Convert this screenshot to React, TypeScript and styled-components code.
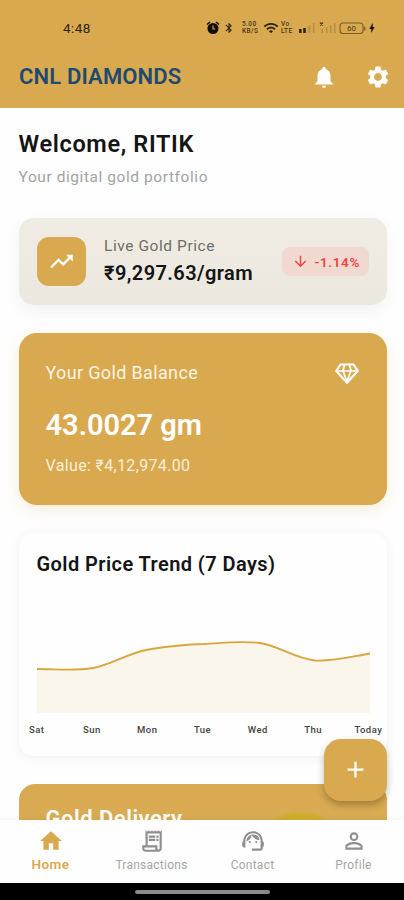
import React from 'react';
import styled, { createGlobalStyle } from 'styled-components';
import {
  MdAdd, MdArrowDownward, MdBluetooth, MdBolt, MdHome, MdNotifications,
  MdOutlineReceiptLong, MdOutlineSupportAgent, MdPersonOutline,
  MdSettings, MdTrendingUp, MdWifi,
} from 'react-icons/md';

const gold = '#d8a94f';

const GlobalStyle = createGlobalStyle`
  * { box-sizing: border-box; }
  body { margin: 0; background: #fefefe; font-family: Roboto, "Noto Sans", sans-serif; }
  svg { display: block; flex: none; }
`;

const Screen = styled.div`
  display: flex;
  flex-direction: column;
  width: 404px;
  height: 900px;
  overflow: hidden;
  background: #fefefe;
`;

const Header = styled.header`
  flex: none;
  height: 108px;
  background: ${gold};
`;

const StatusBar = styled.div`
  display: flex;
  align-items: center;
  justify-content: space-between;
  height: 56px;
  padding: 0 26px 0 63px;
  color: #2e2411;
`;

const Clock = styled.span`
  font-size: 13.5px;
  font-weight: 400;
  letter-spacing: 0.4px;
  line-height: 16px;
`;

const StatusIcons = styled.div`
  display: flex;
  align-items: center;
`;

const Stack = styled.span<{ $w: number }>`
  display: flex;
  flex-direction: column;
  width: ${p => p.$w}px;
  margin: 0 3px 0 2px;
  font-size: 6.5px;
  font-weight: 500;
  letter-spacing: 0.4px;
  line-height: 7px;
  white-space: nowrap;
  opacity: 0.85;
`;

const AppBar = styled.div`
  display: flex;
  align-items: center;
  height: 42px;
  padding: 0 13px 0 19px;
  color: #fff;
`;

const Brand = styled.h1`
  flex: 1;
  margin: 0;
  color: #1d4a70;
  font-size: 22px;
  font-weight: 600;
  letter-spacing: 0.15px;
  line-height: 26px;
`;

const Actions = styled.div`
  display: flex;
  gap: 28px;
`;

const Body = styled.main`
  flex: 1;
  min-height: 0;
  overflow: hidden;
  padding: 22px 17.5px 0 18.5px;
`;

const Label = styled.div<{
  $size: number; $line: number; $weight?: number; $color?: string; $spacing?: number; $top?: number;
}>`
  margin-top: ${p => p.$top ?? 0}px;
  color: ${p => p.$color ?? '#141414'};
  font-size: ${p => p.$size}px;
  font-weight: ${p => p.$weight ?? 400};
  letter-spacing: ${p => p.$spacing ?? 0}px;
  line-height: ${p => p.$line}px;
  white-space: nowrap;
`;

const Welcome = styled.section`
  height: 88px;
`;

const PriceCard = styled.section`
  display: flex;
  align-items: center;
  height: 87px;
  padding: 0 18px;
  border-radius: 15px;
  background: linear-gradient(#f0ece4, #ebe8e0);
  box-shadow: 0 5px 14px rgba(70, 65, 50, 0.07);
`;

const TrendTile = styled.div`
  display: flex;
  align-items: center;
  justify-content: center;
  width: 49.5px;
  height: 49.5px;
  margin-right: 18px;
  border-radius: 12px;
  background: ${gold};
  color: #fff;
`;

const PriceText = styled.div`
  flex: 1;
  padding-bottom: 3px;
`;

const Change = styled.div`
  display: flex;
  align-items: center;
  width: 87px;
  height: 29px;
  padding-left: 10px;
  gap: 6px;
  border-radius: 8px;
  background: #f1d9d2;
  color: #f0453e;
`;

const BalanceCard = styled.section`
  height: 172px;
  margin-top: 27.5px;
  padding: 27px;
  border-radius: 18px;
  background: ${gold};
  box-shadow: 0 5px 14px rgba(216, 169, 79, 0.2);
`;

const BalanceTop = styled.div`
  display: flex;
  align-items: center;
  justify-content: space-between;
  height: 26px;
  color: #fff;
`;

const ChartCard = styled.section`
  height: 223px;
  margin-top: 28px;
  padding: 18px;
  border-radius: 15px;
  background: #fefefe;
  box-shadow: 0 2px 12px rgba(0, 0, 0, 0.055);
`;

const Chart = styled.svg`
  width: 334px;
  height: 85px;
  margin-top: 58px;
`;

const Days = styled.div`
  display: flex;
  margin: 2px -27.5px 0;
`;

const Day = styled.span`
  flex: 1;
  color: #444;
  font-size: 9.5px;
  font-weight: 500;
  letter-spacing: 0.45px;
  line-height: 16px;
  text-align: center;
`;

const DeliveryCard = styled.section`
  height: 120px;
  margin-top: 28px;
  padding: 22px 27px;
  border-radius: 16px;
  background: radial-gradient(ellipse 30px 12px at 281px 38px, #cfad2c 60%, transparent 100%), linear-gradient(${gold}, #dbb060);
`;

const AddButton = styled.button`
  position: absolute;
  left: 324px;
  top: 738.5px;
  display: flex;
  align-items: center;
  justify-content: center;
  width: 63px;
  height: 62.5px;
  padding: 0;
  border: 0;
  border-radius: 17px;
  background: ${gold};
  color: #fff;
  box-shadow: 0 4px 7px rgba(60, 40, 5, 0.32);
`;

const Nav = styled.nav`
  position: relative;
  display: flex;
  flex: none;
  height: 63px;
  background: #fefefe;
  box-shadow: 0 -1px 5px rgba(0, 0, 0, 0.05);
`;

const NavItem = styled.a<{ $active?: boolean }>`
  display: flex;
  flex: 1;
  flex-direction: column;
  align-items: center;
  padding-top: 8px;
  gap: ${p => (p.$active ? 3 : 4)}px;
  color: ${p => (p.$active ? gold : '#8f8f8f')};
`;

const NavText = styled.span<{ $active?: boolean }>`
  color: ${p => (p.$active ? gold : '#a6a6a6')};
  font-size: ${p => (p.$active ? 13.5 : 12)}px;
  font-weight: ${p => (p.$active ? 600 : 400)};
  letter-spacing: ${p => (p.$active ? 0.5 : 0.25)}px;
  line-height: 15px;
`;

const GestureBar = styled.footer`
  display: flex;
  flex: none;
  align-items: center;
  justify-content: center;
  height: 17px;
  background: #000;
`;

const Handle = styled.div`
  width: 135px;
  height: 4px;
  border-radius: 2px;
  background: #8b8b8b;
`;

const BluetoothIcon = styled(MdBluetooth)`
  margin: 0 5px 0 3px;
`;

const Diamond = () => (
  <svg width="26" height="26" viewBox="0 0 26 26" fill="none" stroke="#fff" strokeWidth="2.200" strokeLinejoin="round">
    <path d="M6.500 4.500h13l4.300 6.500L13 22.800 2.200 11z" />
    <path d="M2.500 11h21M10.500 5L9 10.700l4 11M15.500 5L17 10.700l-4 11" strokeWidth="1.700" />
  </svg>
);

const AlarmClock = () => (
  <svg width="14" height="14" viewBox="0 0 14 14">
    <circle cx="7" cy="7.500" r="5.500" fill="#120d04" />
    <path d="M1 3.500L4 1M13 3.500L10 1" stroke="#120d04" strokeWidth="1.600" />
    <path d="M7 4.500v3.500h2.200" fill="none" stroke={gold} strokeWidth="1.200" />
  </svg>
);

const Signals = () => (
  <svg width="38" height="14" viewBox="0 0 38 14">
    <path d="M1 8h2.600v4H1zM5.200 7h2.600v5H5.200z" fill="#2e2411" />
    <path d="M10.500 4.500h1.800V12h-1.800zM15 2h1.500v10H15zM23.500 8h1.500v4h-1.500zM28 6h1.500v6H28zM32 4h1.500v8H32zM36 2h1.500v10H36z" fill="#b39043" />
    <path d="M22 1.500l3 3m0-3l-3 3" stroke="#4c3b19" strokeWidth="1.200" />
  </svg>
);

const BatteryIcon = styled.svg`
  margin-left: 3px;
`;

const Battery = () => (
  <BatteryIcon width="27" height="13" viewBox="0 0 27 13">
    <rect x="1" y="1" width="23" height="10.500" rx="3" fill="none" stroke="#77602e" strokeWidth="1.100" />
    <path d="M25.700 4.500v4" stroke="#77602e" strokeWidth="1.300" />
    <text x="12.500" y="9.200" fontFamily="Roboto" fontSize="8" textAnchor="middle" fill="#4c3b19">60</text>
  </BatteryIcon>
);

const days = ['Sat', 'Sun', 'Mon', 'Tue', 'Wed', 'Thu', 'Today'];
const curve = 'M0 34C19 34 39 36 56 33C75 29.500 91 18 111.500 14.500C130 11.500 148 9.500 167 9C187 8 204 5.500 222.500 8C243 11 256 23 278 25.500C297 26.500 315 21.500 333 18.500';

const tabs = [
  { name: 'Home', Icon: MdHome, active: true },
  { name: 'Transactions', Icon: MdOutlineReceiptLong },
  { name: 'Contact', Icon: MdOutlineSupportAgent },
  { name: 'Profile', Icon: MdPersonOutline },
];

export default function App() {
  return (
    <Screen>
      <GlobalStyle />
      <Header>
        <StatusBar>
          <Clock>4:48</Clock>
          <StatusIcons>
            <AlarmClock />
            <BluetoothIcon size={12} />
            <Stack $w={18}><span>5.00</span><span>KB/S</span></Stack>
            <MdWifi size={16} />
            <Stack $w={14}><span>Vo</span><span>LTE</span></Stack>
            <Signals />
            <Battery />
            <MdBolt size={12} color="#120d04" />
          </StatusIcons>
        </StatusBar>
        <AppBar>
          <Brand>CNL DIAMONDS</Brand>
          <Actions>
            <MdNotifications size={26} />
            <MdSettings size={26} />
          </Actions>
        </AppBar>
      </Header>

      <Body>
        <Welcome>
          <Label $size={23.5} $line={28} $weight={600} $spacing={0.65}>Welcome, RITIK</Label>
          <Label $size={15.5} $line={20} $color="#a3a3a3" $spacing={0.57} $top={9}>Your digital gold portfolio</Label>
        </Welcome>

        <PriceCard>
          <TrendTile><MdTrendingUp size={27} /></TrendTile>
          <PriceText>
            <Label $size={15.5} $line={20} $color="#6f6d69" $spacing={0.57}>Live Gold Price</Label>
            <Label $size={20} $line={24} $weight={600} $spacing={0.4} $top={5}>₹9,297.63/gram</Label>
          </PriceText>
          <Change>
            <MdArrowDownward size={17} />
            <Label $size={13.5} $line={18} $weight={600} $color="#f0453e" $spacing={0.6}>-1.14%</Label>
          </Change>
        </PriceCard>

        <BalanceCard>
          <BalanceTop>
            <Label $size={18} $line={24} $color="#fdf4e2" $spacing={0.35}>Your Gold Balance</Label>
            <Diamond />
          </BalanceTop>
          <Label $size={29} $line={34} $weight={600} $color="#fff" $top={22}>43.0027 gm</Label>
          <Label $size={16} $line={20} $color="#fbefd9" $spacing={0.35} $top={14}>Value: ₹4,12,974.00</Label>
        </BalanceCard>

        <ChartCard>
          <Label $size={20} $line={26} $weight={600} $spacing={0.43}>Gold Price Trend (7 Days)</Label>
          <Chart viewBox="0 0 334 85">
            <path d={`${curve}V78H0Z`} fill="#fbf6ec" />
            <path d={curve} fill="none" stroke="#d8a63f" strokeWidth="1.800" />
          </Chart>
          <Days>{days.map(d => <Day key={d}>{d}</Day>)}</Days>
        </ChartCard>

        <DeliveryCard>
          <Label $size={22} $line={26} $weight={600} $color="#fff" $spacing={0.5}>Gold Delivery</Label>
        </DeliveryCard>
      </Body>

      <AddButton aria-label="Add"><MdAdd size={27} /></AddButton>

      <Nav>
        {tabs.map(({ name, Icon, active }) => (
          <NavItem key={name} $active={active}>
            <Icon size={26} />
            <NavText $active={active}>{name}</NavText>
          </NavItem>
        ))}
      </Nav>
      <GestureBar><Handle /></GestureBar>
    </Screen>
  );
}
